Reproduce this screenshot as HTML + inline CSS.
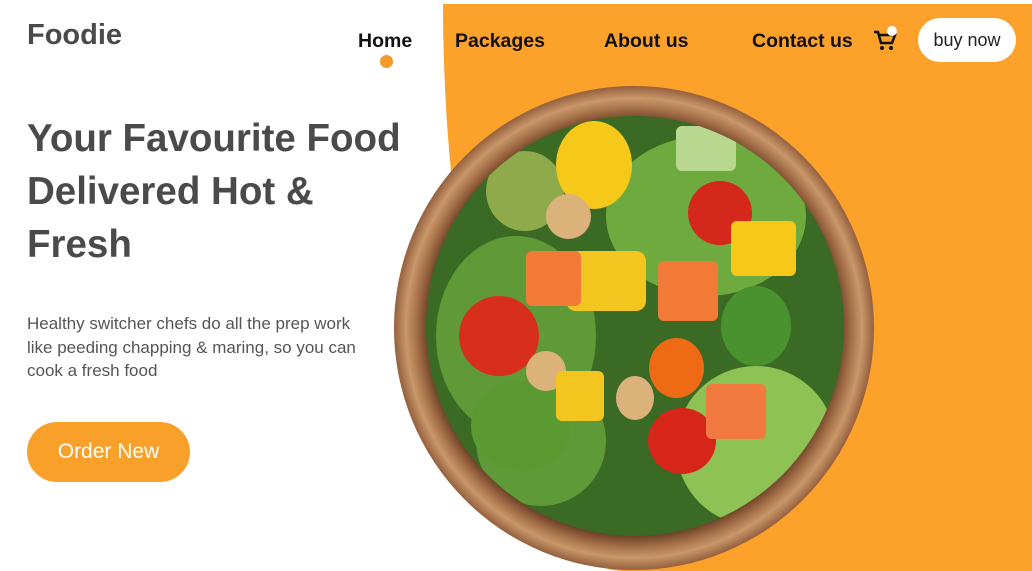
<!DOCTYPE html>
<html><head><style>
*{margin:0;padding:0;box-sizing:border-box}
body{width:1032px;height:571px;overflow:hidden;background:#fff;position:relative;font-family:"Liberation Sans",sans-serif}
.or{position:absolute;left:443px;top:4px;right:0;bottom:0;background:#fca12a;border-bottom-left-radius:180px 567px}
.logo{position:absolute;left:27px;top:19px;font-size:29px;font-weight:bold;color:#4a4a4a}
.nav{position:absolute;top:30px;font-size:19.5px;font-weight:bold;color:#111}
.dot{position:absolute;left:380px;top:55px;width:13px;height:13px;border-radius:50%;background:#f59a26}
h1{position:absolute;left:27px;top:112px;font-size:38.5px;line-height:53px;color:#4a4a4a;font-weight:bold}
p{position:absolute;left:27px;top:312px;font-size:17px;line-height:23.5px;color:#555}
.btn{position:absolute;left:27px;top:422px;width:163px;height:60px;border-radius:30px;background:#f9a02b;color:#fff;font-size:21px;text-align:center;line-height:60px}
.buy{position:absolute;left:918px;top:18px;width:98px;height:44px;border-radius:22px;background:#fff;color:#222;font-size:18px;text-align:center;line-height:44px}
.bowl{position:absolute;left:394px;top:86px;width:480px;height:484px;border-radius:50%;background:radial-gradient(ellipse closest-side at 50% 50%,#5a3420 0,#6e4228 86%,#a8734a 91%,#c9976a 95%,#94603e 100%)}
.in{position:absolute;left:426px;top:116px;width:418px;height:420px;border-radius:50%;background:#3a6a24;overflow:hidden}
.in div{position:absolute;border-radius:50%}
</style></head><body>
<div class="or"></div>
<div class="logo">Foodie</div>
<div class="nav" style="left:358px">Home</div>
<div class="dot"></div>
<div class="nav" style="left:455px">Packages</div>
<div class="nav" style="left:604px">About us</div>
<div class="nav" style="left:752px">Contact us</div>
<svg style="position:absolute;left:872px;top:24px" width="28" height="30" viewBox="0 0 28 30"><path d="M2 8h4l3 11h11l3-8H8" fill="none" stroke="#111" stroke-width="2.5"/><circle cx="10" cy="24" r="2" fill="#111"/><circle cx="19" cy="24" r="2" fill="#111"/><circle cx="20" cy="7" r="5" fill="#fff"/></svg>
<div class="buy">buy now</div>
<h1>Your Favourite Food<br>Delivered Hot &amp;<br>Fresh</h1>
<p>Healthy switcher chefs do all the prep work<br>like peeding chapping &amp; maring, so you can<br>cook a fresh food</p>
<div class="btn">Order New</div>
<div class="bowl"></div>
<div class="in">
<div style="left:10px;top:120px;width:160px;height:200px;background:#5f9a36"></div>
<div style="left:180px;top:20px;width:200px;height:160px;background:#6eaa3e"></div>
<div style="left:250px;top:250px;width:160px;height:160px;background:#8fc254"></div>
<div style="left:50px;top:260px;width:130px;height:130px;background:#5e9a38"></div>
<div style="left:60px;top:35px;width:78px;height:80px;background:#8faa4a"></div>
<div style="left:130px;top:5px;width:76px;height:88px;background:#f5c81a"></div>
<div style="left:250px;top:10px;width:60px;height:45px;border-radius:6px;background:#b8d890"></div>
<div style="left:262px;top:65px;width:64px;height:64px;background:#d3281b"></div>
<div style="left:33px;top:180px;width:80px;height:80px;background:#d82e1c"></div>
<div style="left:140px;top:135px;width:80px;height:60px;border-radius:10px;background:#f2c51f"></div>
<div style="left:100px;top:135px;width:55px;height:55px;border-radius:6px;background:#f07a36"></div>
<div style="left:232px;top:145px;width:60px;height:60px;border-radius:6px;background:#f07a36"></div>
<div style="left:305px;top:105px;width:65px;height:55px;border-radius:6px;background:#f5c81a"></div>
<div style="left:223px;top:222px;width:55px;height:60px;background:#ee6a14"></div>
<div style="left:295px;top:170px;width:70px;height:80px;background:#4a922e"></div>
<div style="left:45px;top:265px;width:100px;height:90px;background:#5a9a30"></div>
<div style="left:222px;top:292px;width:68px;height:66px;background:#d8251a"></div>
<div style="left:280px;top:268px;width:60px;height:55px;border-radius:6px;background:#f07a40"></div>
<div style="left:120px;top:78px;width:45px;height:45px;background:#dbb27a"></div>
<div style="left:100px;top:235px;width:40px;height:40px;background:#dbb27a"></div>
<div style="left:190px;top:260px;width:38px;height:44px;background:#dbb27a"></div>
<div style="left:130px;top:255px;width:48px;height:50px;border-radius:6px;background:#f2c51f"></div>
</div>
</body></html>
